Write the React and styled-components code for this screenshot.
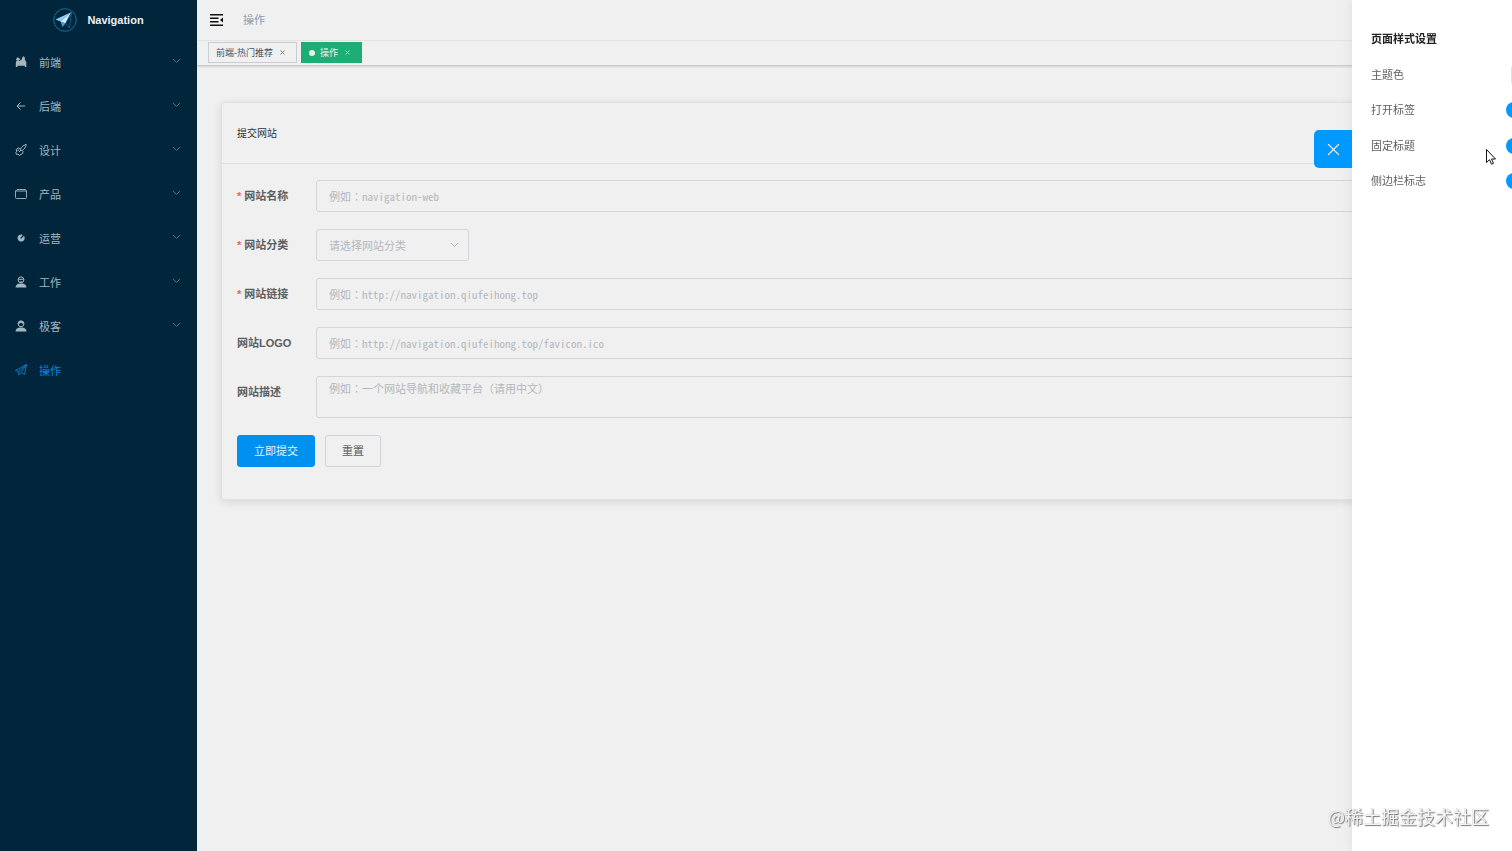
import React from "react";
import styled, { createGlobalStyle } from "styled-components";

const sans = `"Liberation Sans", "Noto Sans CJK SC", sans-serif`;

const GlobalStyle = createGlobalStyle`
  *, *::before, *::after { box-sizing: border-box; }
  body { margin: 0; background: #f0f0f0; font: 11px/16px ${sans}; color: #303133; overflow: hidden; }
  button, input, select, textarea { font: inherit; margin: 0; }
  h1, h2, p, ul { margin: 0; padding: 0; }
`;

const Page = styled.div`
  display: flex;
  min-height: 100vh;
  overflow: hidden;
`;

const Sidebar = styled.nav`
  width: 197px;
  flex: none;
  background: #01263c;
`;

const Brand = styled.a`
  display: flex;
  align-items: center;
  justify-content: center;
  gap: 10px;
  height: 40px;
  color: #f0f0f0;
  font-weight: 700;
  text-decoration: none;
`;

const Menu = styled.ul`
  list-style: none;
`;

const MenuLink = styled.a`
  display: flex;
  align-items: center;
  gap: 11px;
  height: 44px;
  padding: 0 16px 0 14px;
  color: ${(p) => (p.$active ? "#0d85d8" : "#a5b6c0")};
  text-decoration: none;
`;

const MenuText = styled.span`
  flex: 1;
  padding-top: 2px;
`;

const Main = styled.main`
  flex: 1;
  min-width: 0;
`;

const Topbar = styled.header`
  display: flex;
  align-items: center;
  gap: 19px;
  height: 41px;
  padding: 0 13px;
  border-bottom: 1px solid #e4e5e6;
`;

const IconButton = styled.button`
  display: flex;
  padding: 0;
  border: 0;
  background: none;
  color: #111;
`;

const Crumb = styled.span`
  color: #8b9cad;
`;

const Tags = styled.div`
  display: flex;
  align-items: flex-start;
  gap: 4px;
  height: 25px;
  padding: 1px 11px 0;
  border-bottom: 1px solid #cbcccd;
  box-shadow: 0 1px 2px rgba(0, 0, 0, 0.12);
`;

const Tag = styled.a`
  display: flex;
  align-items: center;
  gap: 5px;
  height: 21px;
  padding: 0 11px 0 7px;
  border: 1px solid ${(p) => (p.$active ? "#1fad76" : "#c9cdd3")};
  background: ${(p) => (p.$active ? "#1fad76" : "#f0f0f0")};
  color: ${(p) => (p.$active ? "#f0f0f0" : "#495060")};
  font-size: 9px;
  text-decoration: none;
  & > svg { margin-left: 2px; opacity: 0.8; }
`;

const Dot = styled.i`
  width: 6px;
  height: 6px;
  border-radius: 50%;
  background: #f0f0f0;
`;

const Card = styled.section`
  margin: 36px 24px;
  border: 1px solid #e0e1e3;
  border-radius: 3px;
  background: #f0f0f0;
  box-shadow: 0 2px 10px rgba(0, 0, 0, 0.11);
`;

const CardTitle = styled.h2`
  height: 61px;
  padding: 0 15px;
  border-bottom: 1px solid #dcdee1;
  font-size: 10px;
  font-weight: 400;
  line-height: 61px;
`;

const Form = styled.form`
  display: flex;
  flex-direction: column;
  gap: 17px;
  padding: 16px 15px 32px;
`;

const Field = styled.div`
  display: flex;
  align-items: flex-start;
`;

const Label = styled.label`
  width: 79px;
  flex: none;
  color: #5b5e63;
  font-weight: 700;
  line-height: 32px;
  ${(p) => p.$required && `&::before { content: "*"; margin-right: 3px; color: #ee5f5f; }`}
`;

const controlLook = `
  border: 1px solid #d3d5da;
  border-radius: 3px;
  background: #f0f0f0;
  outline: 0;
  font: 11px/16px "Noto Sans Mono CJK TC", "Noto Sans CJK TC", monospace;
  color: #b4b7bd;
  &::placeholder { color: #b4b7bd; opacity: 1; }
`;

const Input = styled.input`
  ${controlLook}
  flex: 1;
  min-width: 0;
  height: 32px;
  padding: 0 12px 1px;
`;

const Area = styled.textarea`
  ${controlLook}
  flex: 1;
  min-width: 0;
  height: 42px;
  padding: 3px 12px;
  resize: none;
`;

const SelectBox = styled.div`
  display: grid;
  align-items: center;
  width: 153px;
  & > * { grid-area: 1 / 1; }
  & > svg { justify-self: end; margin-right: 10px; color: #b4b7bd; pointer-events: none; }
`;

const Select = styled.select`
  ${controlLook}
  font-family: "Noto Sans CJK SC", sans-serif;
  appearance: none;
  height: 32px;
  padding: 0 12px 1px;
`;

const Actions = styled.div`
  display: flex;
  gap: 10px;
`;

const Button = styled.button`
  height: 32px;
  padding: 0 16px;
  border: 1px solid ${(p) => (p.$primary ? "#0090f0" : "#d0d3d9")};
  border-radius: 3px;
  background: ${(p) => (p.$primary ? "#0090f0" : "#f0f0f0")};
  color: ${(p) => (p.$primary ? "#f0f0f0" : "#5b5e63")};
`;

const Drawer = styled.aside`
  position: fixed;
  top: 0;
  bottom: 0;
  right: -45px;
  width: 205px;
  padding: 30px 19px;
  background: #fff;
  box-shadow: 0 0 12px rgba(0, 0, 0, 0.08);
`;

const DrawerToggle = styled.button`
  position: absolute;
  top: 130px;
  right: 100%;
  display: grid;
  place-items: center;
  width: 38px;
  height: 38px;
  padding: 0;
  border: 0;
  border-radius: 5px 0 0 5px;
  background: #0099ff;
  color: #fff;
`;

const Settings = styled.div`
  display: flex;
  flex-direction: column;
  justify-content: space-between;
  height: 160px;
  line-height: 18px;
`;

const SettingsTitle = styled.h2`
  font-size: 11px;
  color: #222;
`;

const Setting = styled.label`
  display: flex;
  align-items: center;
  justify-content: space-between;
  height: 18px;
  color: #606060;
`;

const Switch = styled.input`
  appearance: none;
  width: 32px;
  height: 16px;
  margin: 0;
  border-radius: 8px;
  background: radial-gradient(circle at 24px 8px, #fff 6px, #0099ff 7px);
`;

const Swatch = styled.input`
  appearance: none;
  width: 27px;
  height: 20px;
  padding: 3px;
  border: 1px solid #e2e2e2;
  border-radius: 3px;
  background: #fff;
`;

const Pointer = styled.svg`
  position: fixed;
  top: 148px;
  right: 15px;
`;

const Watermark = styled.p`
  position: fixed;
  right: 23px;
  bottom: 22px;
  color: #f4f4f4;
  font: 18px/26px "Noto Sans CJK SC", sans-serif;
  text-shadow: 1px 1px 1px #777, 0 0 1px #aaa;
`;

const Glyph = ({ size = 14, children, ...rest }) => (
  <svg width={size} height={size} viewBox="0 0 14 14" fill="none" stroke="currentColor" strokeWidth="1" aria-hidden="true" {...rest}>
    {children}
  </svg>
);

const Chevron = () => (
  <svg width="9" height="9" viewBox="0 0 9 9" fill="none" stroke="currentColor" strokeWidth="1" aria-hidden="true">
    <path d="M1 2l3.500 3.500L8 2" />
  </svg>
);

const DimChevron = styled.span`
  display: flex;
  height: 11px;
  color: #557384;
`;

const Cross = ({ size }) => (
  <svg width={size} height={size} viewBox="0 0 12 12" fill="none" stroke="currentColor" strokeWidth={size > 6 ? 1.1 : 2} aria-hidden="true">
    <path d="M1 1l10 10M11 1L1 11" />
  </svg>
);

const icons = {
  front: (
    <Glyph>
      <g fill="currentColor" stroke="none">
        <circle cx="4" cy="4.200" r="1.800" />
        <path d="M2.300 6h4V4.800h1.400L8.500 2l1.300-.7 1 1.200L11 5l1.300 2v5h-1.500v-1.200H3.500V12H1.800V8.500z" />
      </g>
    </Glyph>
  ),
  back: <Glyph><path d="M11 7H3M6.500 3.500L3 7l3.500 3.500" /></Glyph>,
  design: (
    <Glyph>
      <path d="M12.300 1.500c-2.300.3-4.500 2-6 4.700l1.500 1.600c2.500-1.500 4-3.800 4.500-6.300zM6 5.800L4.300 4.800 2 6.800l1 1.200-1.200 1.700.8 1.800 1.500-.4 1 1.400 3.500-2 .6-2.200M5 9l2.200-2M4.500 6.500L3.800 8" />
    </Glyph>
  ),
  product: <Glyph strokeWidth=".9"><path d="M3 2.500h8.500l1 1.500v6.500a1 1 0 0 1-1 1h-9a1 1 0 0 1-1-1V4zM1.500 4h11" /></Glyph>,
  operate: (
    <Glyph>
      <path d="M10 4.800A3.600 3.600 0 1 1 7 3.400c1 0 1.900.4 1.900.4L6.300 7l.9.800z" fill="currentColor" stroke="none" />
    </Glyph>
  ),
  work: (
    <Glyph>
      <path d="M1.500 12.500c0-2.500 1.800-3.500 4-4h3c2.200.5 4 1.500 4 4z" fill="currentColor" stroke="none" />
      <circle cx="7" cy="4.800" r="2.900" />
      <path d="M4.300 4.300h5.400M5.800 7h2.400" />
    </Glyph>
  ),
  geek: (
    <Glyph>
      <path d="M1.500 12.500c0-2.500 1.800-3.500 4-4h3c2.200.5 4 1.500 4 4z" fill="currentColor" stroke="none" />
      <circle cx="7" cy="4.800" r="2.900" />
      <path d="M3.700 5C3.700.500 10.300.500 10.300 5c-1.800-.2-2.600-.7-3.300-1.200C6.300 4.300 5.500 4.800 3.700 5z" fill="currentColor" stroke="none" />
    </Glyph>
  ),
  action: <Glyph><path d="M1.500 7.500l11-6-2 10-3.500-2-2.200 2.500-.3-3.500zM4.500 8.500l8-7-5.500 8" strokeWidth=".8" /></Glyph>,
};

const menu = [
  ["前端", "front"],
  ["后端", "back"],
  ["设计", "design"],
  ["产品", "product"],
  ["运营", "operate"],
  ["工作", "work"],
  ["极客", "geek"],
  ["操作", "action"],
];

export default function App() {
  return (
    <>
      <GlobalStyle />
      <Page>
        <Sidebar>
          <Brand href="#">
            <svg width="24" height="24" viewBox="0 0 24 24" fill="none" aria-hidden="true">
              <circle cx="12" cy="12" r="11.300" stroke="#0f6f9f" />
              <path d="M18.500 4L2.500 11.500l5 2z" fill="#8ecbf7" />
              <path d="M18.500 4L7.500 13.500l5 2z" fill="#d6edff" />
              <path d="M7.500 13.500l2 5.500 3-3.500z" fill="#4d9ed8" />
              <path d="M18.500 4l-2 16-4-4.500z" stroke="#0f6f9f" strokeWidth=".8" />
            </svg>
            Navigation
          </Brand>
          <Menu>
            {menu.map(([name, icon]) => (
              <li key={name}>
                <MenuLink href="#" $active={icon === "action"}>
                  {icons[icon]}
                  <MenuText>{name}</MenuText>
                  {icon !== "action" && <DimChevron><Chevron /></DimChevron>}
                </MenuLink>
              </li>
            ))}
          </Menu>
        </Sidebar>
        <Main>
          <Topbar>
            <IconButton type="button" aria-label="菜单">
              <svg width="14" height="12" viewBox="0 0 14 12" fill="currentColor" aria-hidden="true">
                <path d="M0 0h13v1.500H0zM0 3.500h8.500V5H0zM0 7h8.500v1.500H0zM0 10.500h13V12H0zM13 3.500v5L10 6z" />
              </svg>
            </IconButton>
            <Crumb>操作</Crumb>
          </Topbar>
          <Tags>
            <Tag href="#">前端-热门推荐 <Cross size={5} /></Tag>
            <Tag href="#" $active><Dot />操作 <Cross size={5} /></Tag>
          </Tags>
          <Card>
            <CardTitle>提交网站</CardTitle>
            <Form onSubmit={(e) => e.preventDefault()}>
              <Field>
                <Label htmlFor="name" $required>网站名称</Label>
                <Input id="name" placeholder="例如：navigation-web" />
              </Field>
              <Field>
                <Label htmlFor="category" $required>网站分类</Label>
                <SelectBox>
                  <Select id="category"><option>请选择网站分类</option></Select>
                  <Chevron />
                </SelectBox>
              </Field>
              <Field>
                <Label htmlFor="link" $required>网站链接</Label>
                <Input id="link" placeholder="例如：http://navigation.qiufeihong.top" />
              </Field>
              <Field>
                <Label htmlFor="logo">网站LOGO</Label>
                <Input id="logo" placeholder="例如：http://navigation.qiufeihong.top/favicon.ico" />
              </Field>
              <Field>
                <Label htmlFor="description">网站描述</Label>
                <Area id="description" placeholder="例如：一个网站导航和收藏平台（请用中文）" />
              </Field>
              <Actions>
                <Button type="submit" $primary>立即提交</Button>
                <Button type="reset">重置</Button>
              </Actions>
            </Form>
          </Card>
        </Main>
      </Page>
      <Drawer>
        <DrawerToggle type="button" aria-label="关闭"><Cross size={13} /></DrawerToggle>
        <Settings>
          <SettingsTitle>页面样式设置</SettingsTitle>
          <Setting>主题色<Swatch type="button" aria-label="主题色" /></Setting>
          <Setting>打开标签<Switch type="checkbox" defaultChecked /></Setting>
          <Setting>固定标题<Switch type="checkbox" defaultChecked /></Setting>
          <Setting>侧边栏标志<Switch type="checkbox" defaultChecked /></Setting>
        </Settings>
      </Drawer>
      <Pointer width="12" height="18" viewBox="0 0 12 18" aria-hidden="true">
        <path d="M1.500 1.500v13l3-2.800 2 4.500 2-.9-2-4.300h4z" fill="#fff" stroke="#111" />
      </Pointer>
      <Watermark>@稀土掘金技术社区</Watermark>
    </>
  );
}
